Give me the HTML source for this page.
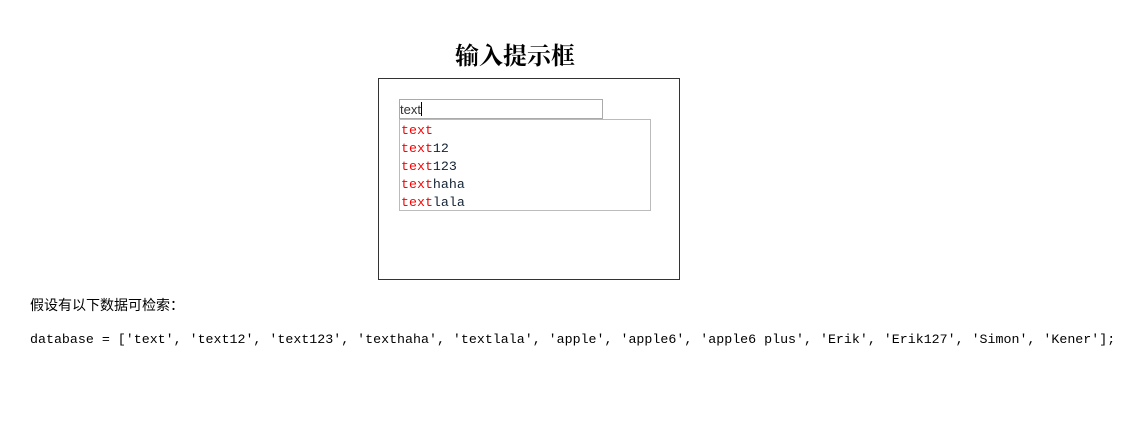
<!DOCTYPE html>
<html><head><meta charset="utf-8"><style>
body{margin:0;width:1146px;height:430px;background:#fff;position:relative;font-family:"Liberation Sans","Noto Sans CJK SC",sans-serif;}
.t{position:absolute;left:455px;top:38px;font-size:24px;font-weight:bold;color:#000;line-height:32px;font-family:"Noto Serif CJK SC",serif;}
.box{position:absolute;left:378px;top:78px;width:300px;height:200px;border:1px solid #333;}
.inp{position:absolute;left:399px;top:99px;width:202px;height:18px;border:1px solid #aaa;font-size:13px;line-height:19px;color:#333;}
.inp span{display:inline-block;width:1px;height:14px;background:#000;vertical-align:-2px;}
.dd{position:absolute;left:399px;top:119px;width:250px;height:90px;border:1px solid #bbb;font-family:"Liberation Mono",monospace;font-size:13.3px;}
.dd .in{padding-top:2px;}
.dd .in div{height:18px;line-height:18px;padding-left:1px;color:#123;}
.dd b{font-weight:normal;color:#f00;}
.p{position:absolute;left:30px;top:294px;font-size:14px;line-height:22px;}
.c{position:absolute;left:30px;top:330px;font-family:"Liberation Mono",monospace;font-size:13.3px;line-height:20px;white-space:pre;}
</style></head><body>
<div class="t">输入提示框</div>
<div class="box"></div>
<div class="inp">text<span></span></div>
<div class="dd"><div class="in">
<div><b>text</b></div>
<div><b>text</b>12</div>
<div><b>text</b>123</div>
<div><b>text</b>haha</div>
<div><b>text</b>lala</div>
</div></div>
<div class="p">假设有以下数据可检索：</div>
<div class="c">database = ['text', 'text12', 'text123', 'texthaha', 'textlala', 'apple', 'apple6', 'apple6 plus', 'Erik', 'Erik127', 'Simon', 'Kener'];</div>
</body></html>
